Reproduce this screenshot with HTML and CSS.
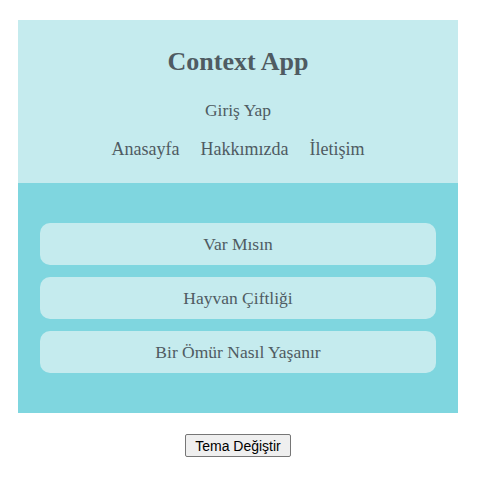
FILE: index.html
```html
<!DOCTYPE html>
<html lang="tr">
<head>
<meta charset="utf-8">
<link rel="stylesheet" href="styles.css">
</head>
<body>
<div class="app">
  <header class="header">
    <h1 class="title">Context App</h1>
    <div class="login">Giriş Yap</div>
    <nav class="nav">
      <span class="nav-item">Anasayfa</span>
      <span class="nav-item">Hakkımızda</span>
      <span class="nav-item">İletişim</span>
    </nav>
  </header>
  <main class="main">
    <div class="card">Var Mısın</div>
    <div class="card">Hayvan Çiftliği</div>
    <div class="card">Bir Ömür Nasıl Yaşanır</div>
  </main>
  <div class="actions">
    <button class="theme-btn">Tema Değiştir</button>
  </div>
</div>
</body>
</html>
```
FILE: styles.css
```css
body {
  margin: 0;
  background: #ffffff;
  font-family: "Liberation Serif", "Times New Roman", serif;
}
.app {
  width: 440px;
  margin: 20px 0 0 18px;
}
.header {
  background: #c5ebee;
  color: #4f5b62;
  text-align: center;
  padding: 27px 0 24px;
}
.title {
  margin: 0;
  font-size: 26px;
  line-height: 30px;
  font-weight: bold;
}
.login {
  margin-top: 23px;
  font-size: 17.5px;
  line-height: 20px;
}
.nav {
  margin-top: 19px;
  display: flex;
  justify-content: center;
  gap: 21px;
  font-size: 18px;
  line-height: 20px;
}
.main {
  background: #7fd6df;
  padding: 40px 22px;
  display: flex;
  flex-direction: column;
  gap: 12px;
}
.card {
  background: #c5ebee;
  color: #4f5b62;
  border-radius: 10px;
  height: 42px;
  display: flex;
  align-items: center;
  justify-content: center;
  font-size: 17.5px;
}
.actions {
  display: flex;
  justify-content: center;
  margin-top: 21px;
}
.theme-btn {
  box-sizing: border-box;
  font-family: "Liberation Sans", Arial, sans-serif;
  font-size: 14px;
  color: #000;
  background: #efefef;
  border: 1px solid #767676;
  border-radius: 2px;
  padding: 0 9px;
  height: 23px;
  line-height: 20px;
}
```
